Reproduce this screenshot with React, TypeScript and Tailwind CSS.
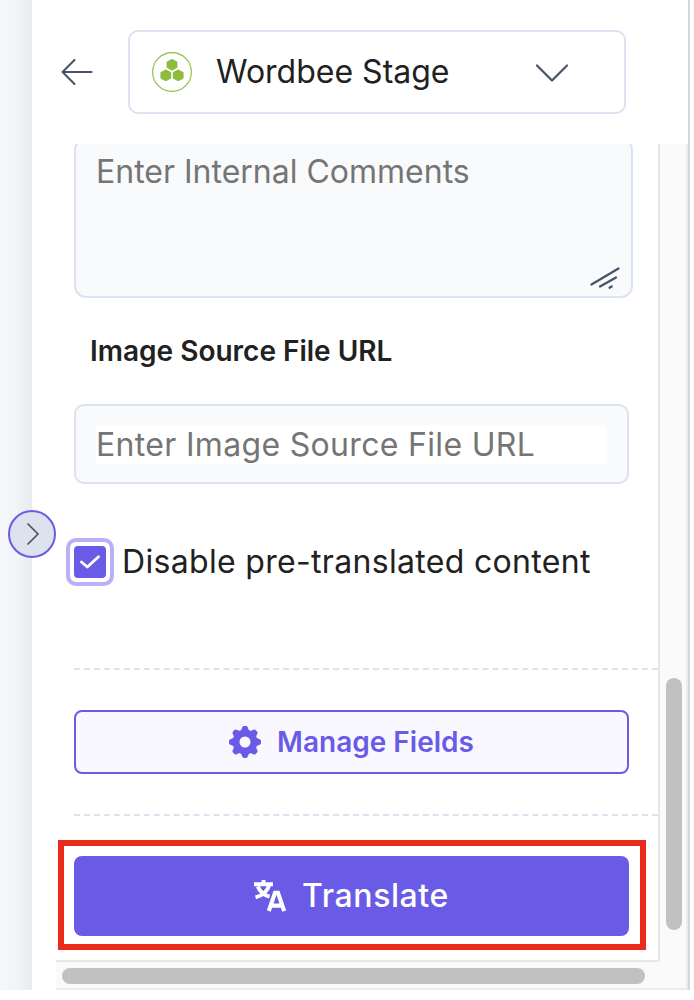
import type { ReactNode } from "react";

function ArrowLeft() {
  return (
    <svg width="32" height="28" viewBox="0 0 32 28" fill="none" stroke="#475467" strokeWidth="2.1" strokeLinecap="round" strokeLinejoin="round">
      <path d="M30.5 14H1.5M13.5 2 1.5 14l12 12" />
    </svg>
  );
}

function WordbeeLogo() {
  return (
    <svg width="40" height="40" viewBox="0 0 40 40" fill="#8fbc3c">
      <circle cx="20" cy="20" r="19.4" fill="none" stroke="#8fbc3c" strokeWidth="1.1" />
      <path id="cell" d="M20 8 24.4 10.4v4.8L20 17.6 15.6 15.2v-4.8Z" stroke="#8fbc3c" strokeWidth="2" strokeLinejoin="round" />
      <use href="#cell" x="-6.2" y="10.6" />
      <use href="#cell" x="6.2" y="10.6" />
    </svg>
  );
}

function Gear() {
  const teeth = [0, 45, 90, 135, 180, 225, 270, 315];
  return (
    <svg width="32" height="32" viewBox="0 0 32 32">
      <circle cx="16" cy="16" r="9" fill="none" stroke="#6a5be7" strokeWidth="7" />
      {teeth.map((a) => (
        <path key={a} d="M11.8 5 13.2 1.4Q13.6 0 15 0h2q1.4 0 1.8 1.4L20.2 5Z" fill="#6a5be7" transform={`rotate(${a} 16 16)`} />
      ))}
    </svg>
  );
}

function TranslateIcon() {
  return (
    <svg width="32" height="32" viewBox="0 0 32 32" fill="none" stroke="#fff">
      <path d="M0 4.2h19M9.5 0v4M3.8 6.5c2 5 6 8.5 11.8 10.2M15.5 4.5C13.5 11.2 9 15.6 1.5 17.4" strokeWidth="3.9" />
      <path d="M14.8 31 21 12.8h3L30.2 31M17.5 25.6h10" strokeWidth="4.1" />
    </svg>
  );
}

function Label({ children }: { children: ReactNode }) {
  return <div className="mt-[35px] ml-[16px] h-[36px] text-[28px] leading-[36px] font-semibold text-[#212121]">{children}</div>;
}

export default function App() {
  return (
    <div className="h-[1000px] w-[694px] overflow-hidden bg-white font-['Inter',sans-serif] text-[#212121]">
      <div className="flex h-[990px] w-[690px] border-r-2 border-[#d3d8df]">
        {/* page edge behind the sidebar, with the collapse handle */}
        <div className="relative w-[32px] shrink-0 bg-linear-to-r from-[#f6f7fc] via-[#f3f4f8] to-[#eaebf0]">
          <button className="absolute top-[510px] left-[8px] z-10 flex size-[48px] items-center justify-center rounded-full border-2 border-[#6a5be7] bg-[#dce2ee]">
            <svg width="14" height="24" viewBox="0 0 14 24" fill="none" stroke="#4b5060" strokeWidth="1.6" className="ml-[2px]">
              <path d="m1.5 1.5 10.5 10.5L1.5 22.5" />
            </svg>
          </button>
        </div>

        <div className="flex min-w-0 flex-1 flex-col">
          <header className="flex h-[144px] shrink-0 items-start pt-[30px] pl-[29px]">
            <button className="flex h-[84px] w-[67px] items-center">
              <ArrowLeft />
            </button>
            <div className="flex h-[84px] w-[498px] items-center rounded-[10px] border-2 border-[#dce2f0] pl-[22px]">
              <WordbeeLogo />
              <span className="ml-[24px] w-[319px] text-[32px] leading-[40px]">Wordbee Stage</span>
              <svg width="34" height="20" viewBox="0 0 34 20" fill="none" stroke="#475467" strokeWidth="2.2" strokeLinecap="round" strokeLinejoin="round" className="mt-[2px]">
                <path d="m2 2.5 15 15L32 2.5" />
              </svg>
            </div>
          </header>

          <div className="flex min-h-0 flex-1 flex-col pl-[24px]">
            <div className="flex h-[816px]">
              <main className="h-[818px] w-[604px] shrink-0 overflow-hidden border-r-2 border-b-2 border-[#e7e7e7] pl-[18px]">
                {/* comments box, scrolled partly under the header */}
                <div className="-mt-[6px] flex h-[160px] w-[559px] rounded-[12px] border-2 border-[#dce2f0] bg-[#f9fafc] pt-[12px] pl-[20px]">
                  <span className="flex-1 text-[32px] leading-[40px] text-[#757575]">Enter Internal Comments</span>
                  <svg width="30" height="24" viewBox="0 0 30 24" fill="none" stroke="#475467" strokeWidth="2.2" strokeLinecap="round" className="mr-[11px] mb-[6px] self-end">
                    <path d="M1.5 18.5 28.5 2.5M10 20.5 26 11.5M19.5 21.8l2.2-1.3" />
                  </svg>
                </div>
                <Label>Image Source File URL</Label>
                <div className="mt-[35px] flex h-[80px] w-[555px] items-center rounded-[10px] border-2 border-[#dce2f0] bg-[#f9fafc] px-[20px]">
                  <div className="h-[39px] flex-1 bg-white text-[32px] leading-[39px] tracking-[0.32px] text-[#757575]">Enter Image Source File URL</div>
                </div>

                <label className="mt-[54px] -ml-[8px] flex h-[48px] items-center">
                  <span className="flex size-[48px] items-center justify-center rounded-[10px] border-4 border-[#b9b0f5] bg-white">
                    <span className="flex size-[32px] items-center justify-center rounded-[4px] bg-[#6a5be7]">
                      <svg width="20" height="14" viewBox="0 0 20 14" fill="none" stroke="#fff" strokeWidth="2.8" strokeLinecap="round" strokeLinejoin="round">
                        <path d="m1.5 7 5.8 5L18.5 1.8" />
                      </svg>
                    </span>
                  </span>
                  <span className="ml-[8px] text-[32px] leading-[40px] tracking-[0.32px]">Disable pre-translated content</span>
                </label>

                <svg width="584" height="2" className="mt-[82px] block">
                  <path d="M0 1h584" stroke="#dce2f0" strokeWidth="2" strokeDasharray="6 3.965" />
                </svg>
                <button className="mt-[40px] flex h-[64px] w-[555px] items-center justify-center rounded-[8px] border-2 border-[#6a5be7] bg-[#f9f8ff] text-[#6a5be7]">
                  <Gear />
                  <span className="ml-[16px] text-[28px] leading-[36px] font-semibold">Manage Fields</span>
                </button>
                <svg width="584" height="2" className="mt-[40px] block">
                  <path d="M0 1h584" stroke="#dce2f0" strokeWidth="2" strokeDasharray="6 3.965" />
                </svg>

                {/* highlighted submit button */}
                <div className="mt-[24px] -ml-[16px] h-[110px] w-[588px] border-6 border-[#ea2a1b] pt-[10px] pl-[10px]">
                  <button className="flex h-[80px] w-[555px] items-center justify-center rounded-[8px] bg-[#6a5be7] text-white">
                    <TranslateIcon />
                    <span className="ml-[16px] text-[32px] leading-[40px] font-medium tracking-[0.58px]">Translate</span>
                  </button>
                </div>
              </main>
              <div className="h-[846px] w-[28px] shrink-0 border-r-2 border-b-2 border-[#ebebeb] bg-[#fafafa] pt-[534px] pl-[6px]">
                <div className="h-[252px] w-[16px] rounded-full bg-[#c1c1c1]" />
              </div>
            </div>
            <div className="mt-[2px] h-[28px] w-[604px] border-b-2 border-[#ebebeb] bg-[#fafafa] pt-[6px] pl-[6px]">
              <div className="h-[16px] w-[583px] rounded-full bg-[#c1c1c1]" />
            </div>
          </div>
        </div>
      </div>
    </div>
  );
}
